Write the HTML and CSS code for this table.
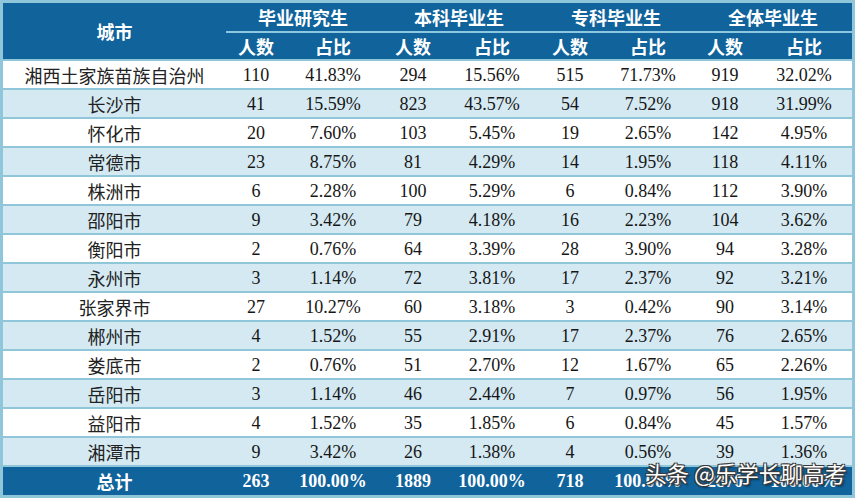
FILE: index.html
```html
<!DOCTYPE html>
<html lang="zh">
<head>
<meta charset="utf-8">
<link rel="stylesheet" href="styles.css">
</head>
<body>
<div class="wrap">
<table class="tbl">
<colgroup>
<col class="c-city"><col class="c-a1"><col class="c-b1"><col class="c-a2"><col class="c-b2"><col class="c-a3"><col class="c-b3"><col class="c-a4"><col class="c-b4">
</colgroup>
<thead>
<tr class="h1">
<th rowspan="2" class="city-h">城市</th>
<th colspan="2" class="grp">毕业研究生</th>
<th colspan="2" class="grp">本科毕业生</th>
<th colspan="2" class="grp">专科毕业生</th>
<th colspan="2" class="grp">全体毕业生</th>
</tr>
<tr class="h2">
<th>人数</th><th>占比</th><th>人数</th><th>占比</th><th>人数</th><th>占比</th><th>人数</th><th>占比</th>
</tr>
</thead>
<tbody>
<tr><td>湘西土家族苗族自治州</td><td>110</td><td>41.83%</td><td>294</td><td>15.56%</td><td>515</td><td>71.73%</td><td>919</td><td>32.02%</td></tr>
<tr><td>长沙市</td><td>41</td><td>15.59%</td><td>823</td><td>43.57%</td><td>54</td><td>7.52%</td><td>918</td><td>31.99%</td></tr>
<tr><td>怀化市</td><td>20</td><td>7.60%</td><td>103</td><td>5.45%</td><td>19</td><td>2.65%</td><td>142</td><td>4.95%</td></tr>
<tr><td>常德市</td><td>23</td><td>8.75%</td><td>81</td><td>4.29%</td><td>14</td><td>1.95%</td><td>118</td><td>4.11%</td></tr>
<tr><td>株洲市</td><td>6</td><td>2.28%</td><td>100</td><td>5.29%</td><td>6</td><td>0.84%</td><td>112</td><td>3.90%</td></tr>
<tr><td>邵阳市</td><td>9</td><td>3.42%</td><td>79</td><td>4.18%</td><td>16</td><td>2.23%</td><td>104</td><td>3.62%</td></tr>
<tr><td>衡阳市</td><td>2</td><td>0.76%</td><td>64</td><td>3.39%</td><td>28</td><td>3.90%</td><td>94</td><td>3.28%</td></tr>
<tr><td>永州市</td><td>3</td><td>1.14%</td><td>72</td><td>3.81%</td><td>17</td><td>2.37%</td><td>92</td><td>3.21%</td></tr>
<tr><td>张家界市</td><td>27</td><td>10.27%</td><td>60</td><td>3.18%</td><td>3</td><td>0.42%</td><td>90</td><td>3.14%</td></tr>
<tr><td>郴州市</td><td>4</td><td>1.52%</td><td>55</td><td>2.91%</td><td>17</td><td>2.37%</td><td>76</td><td>2.65%</td></tr>
<tr><td>娄底市</td><td>2</td><td>0.76%</td><td>51</td><td>2.70%</td><td>12</td><td>1.67%</td><td>65</td><td>2.26%</td></tr>
<tr><td>岳阳市</td><td>3</td><td>1.14%</td><td>46</td><td>2.44%</td><td>7</td><td>0.97%</td><td>56</td><td>1.95%</td></tr>
<tr><td>益阳市</td><td>4</td><td>1.52%</td><td>35</td><td>1.85%</td><td>6</td><td>0.84%</td><td>45</td><td>1.57%</td></tr>
<tr><td>湘潭市</td><td>9</td><td>3.42%</td><td>26</td><td>1.38%</td><td>4</td><td>0.56%</td><td>39</td><td>1.36%</td></tr>
<tr class="total"><td class="tot-label">总计</td><td>263</td><td>100.00%</td><td>1889</td><td>100.00%</td><td>718</td><td>100.00%</td><td>2870</td><td>100.00%</td></tr>
</tbody>
</table>
<div class="watermark">头条 @乐学长聊高考</div>
</div>
</body>
</html>
```
FILE: styles.css
```css
html, body {
  margin: 0;
  padding: 0;
  background: #ffffff;
}
body {
  width: 860px;
  height: 498px;
  overflow: hidden;
}
.wrap {
  position: relative;
  width: 855px;
}
.tbl {
  border-collapse: separate;
  border-spacing: 0;
  table-layout: fixed;
  width: 855px;
  border: 3px solid #90c6da;
  font-family: "Liberation Serif", "Noto Sans CJK SC", serif;
  font-size: 18px;
  color: #161616;
}
.c-city { width: 223px; }
.c-a1 { width: 60px; }
.c-b1 { width: 94px; }
.c-a2 { width: 66px; }
.c-b2 { width: 92px; }
.c-a3 { width: 64px; }
.c-b3 { width: 92px; }
.c-a4 { width: 62px; }
.c-b4 { width: 96px; }

.tbl th {
  background: #10639b;
  color: #ffffff;
  font-family: "Noto Sans CJK SC", sans-serif;
  font-weight: 700;
  font-size: 18px;
  padding: 0;
  text-align: center;
  line-height: 20px;
}
.h1 th {
  height: 28px;
}
.h1 th.grp {
  border-bottom: 2px solid #8ec8e0;
}
.h1 th.grp:first-of-type {
  padding-left: 0;
}
.h2 th {
  height: 26px;
  border-bottom: 2px solid #90c6da;
}
.city-h {
  border-bottom: 2px solid #90c6da;
}
.tbl td {
  height: 27px;
  padding: 0;
  text-align: center;
  line-height: 20px;
  border-bottom: 2px solid #90c6da;
  white-space: nowrap;
}
.tbl td:first-child {
  font-family: "Noto Sans CJK SC", serif;
  font-weight: 400;
  letter-spacing: 0px;
  color: #222;
}
.tbl tbody tr:nth-child(odd) td {
  background: #ffffff;
}
.tbl tbody tr:nth-child(even) td {
  background: #d4e9f2;
}
.tbl tbody tr.total td {
  background: #10639b;
  color: #ffffff;
  font-weight: 700;
  height: 28px;
  border-bottom: none;
}
.tbl tbody tr.total td.tot-label {
  color: #ffffff;
  font-weight: 700;
}
.watermark {
  position: absolute;
  left: 645px;
  top: 459px;
  font-family: "Noto Sans CJK SC", sans-serif;
  font-size: 22px;
  line-height: 26px;
  color: #ffffff;
  letter-spacing: 0px;
  white-space: nowrap;
  text-shadow: 1px 1px 0 #3a3a3a, -1px -1px 0 #3a3a3a, 1px -1px 0 #3a3a3a, -1px 1px 0 #3a3a3a, 2px 2px 2px rgba(0,0,0,0.5);
}
```
